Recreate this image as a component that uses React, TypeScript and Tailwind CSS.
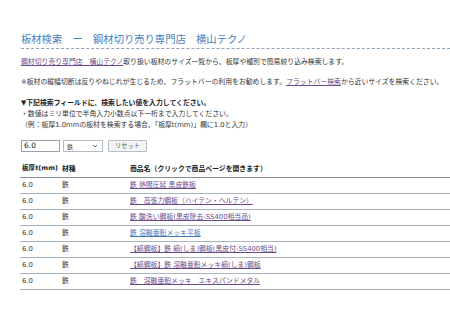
import React from 'react'

const rows = [
  { name: '鉄 熱間圧延 黒皮鉄板', visited: true },
  { name: '鉄　高張力鋼板（ハイテン・ヘルテン）', visited: true },
  { name: '鉄 酸洗い鋼板(黒皮除去-SS400相当品)', visited: true },
  { name: '鉄 溶融亜鉛メッキ平板', visited: false },
  { name: '【縞鋼板】鉄 縞(しま)鋼板(黒皮付-SS400相当)', visited: true },
  { name: '【縞鋼板】鉄 溶融亜鉛メッキ縞(しま)鋼板', visited: true },
  { name: '鉄　溶融亜鉛メッキ　エキスパンドメタル', visited: true },
]

export default function App() {
  return (
    <div
      className="w-[450px] h-[317px] overflow-hidden bg-white pl-[21px] pt-[33px] text-[#333] text-[6.85px]"
      style={{ fontFamily: '"DejaVu Sans", "Noto Sans CJK JP", sans-serif' }}
    >
      {/* title */}
      <h1 className="text-[10.3px] leading-[13px] pb-[2px] text-[#4d7fbd] border-b border-dashed border-[#8fa3b8] whitespace-nowrap">
        板材検索　ー　鋼材切り売り専門店　横山テクノ
      </h1>

      <p className="mt-[8px] leading-[10px] whitespace-nowrap">
        <a className="text-[#6b4a8c] underline">鋼材切り売り専門店　横山テクノ</a>
        取り扱い板材のサイズ一覧から、板厚や種別で簡易絞り込み検索します。
      </p>

      <p className="mt-[10px] leading-[10px] whitespace-nowrap">
        ※板材の縦幅切断は反りやねじれが生じるため、フラットバーの利用をお勧めします。
        <a className="text-[#6b4a8c] underline">フラットバー検索</a>
        から近いサイズを検索ください。
      </p>

      <p className="mt-[11px] leading-[10px] font-bold text-[#222] whitespace-nowrap">
        ▼下記検索フィールドに、検索したい値を入力してください。
      </p>
      <p className="mt-[1px] leading-[11px] whitespace-nowrap">
        ・数値はミリ単位で半角入力小数点以下一桁まで入力してください。
        <br />
        （例：板厚1.0mmの板材を検索する場合、「板厚t(mm)」欄に1.0と入力）
      </p>

      {/* search fields */}
      <div className="mt-[9px] flex items-center h-[12px]">
        <div className="w-[39px] h-[12px] border border-[#9aa3ad] flex items-center px-[2px] text-[7.5px] text-[#111]">
          6.0
        </div>
        <div className="ml-[3px] w-[40px] h-[12px] border border-[#b5bcc4] flex items-center justify-between px-[3px] text-[6px] text-[#444]">
          <span>鉄</span>
          <svg width="6" height="4" viewBox="0 0 6 4" className="mr-[1px]">
            <path d="M1 1 L3 3 L5 1" fill="none" stroke="#555" strokeWidth="0.9" />
          </svg>
        </div>
        <div className="ml-[5px] w-[39px] h-[12px] border border-[#b5bcc4] bg-[#f4f5f6] rounded-[1px] flex items-center justify-center text-[6.3px] text-[#555]">
          リセット
        </div>
      </div>

      {/* results */}
      <table className="mt-[10px] -ml-[1px] w-[430px] border-collapse table-fixed">
        <colgroup>
          <col className="w-[42px]" />
          <col className="w-[68px]" />
          <col />
        </colgroup>
        <thead>
          <tr className="border-b-[1.5px] border-[#8a8f96]">
            <th className="h-[15px] pl-[2px] text-left font-bold text-[#222] whitespace-nowrap text-[6.6px]">板厚t(mm)</th>
            <th className="text-left font-bold text-[#222]">材種</th>
            <th className="text-left font-bold text-[#222] whitespace-nowrap">商品名（クリックで商品ページを開きます）</th>
          </tr>
        </thead>
        <tbody>
          {rows.map((r, i) => (
            <tr key={i} className="border-b border-[#a9b3bd]">
              <td className="h-[16px] pl-[2px] text-[#333]">6.0</td>
              <td className="text-[#333]">鉄</td>
              <td className="whitespace-nowrap">
                <a className={r.visited ? 'text-[#6b4a8c] underline' : 'text-[#3f78b8] underline'}>{r.name}</a>
              </td>
            </tr>
          ))}
        </tbody>
      </table>
    </div>
  )
}
